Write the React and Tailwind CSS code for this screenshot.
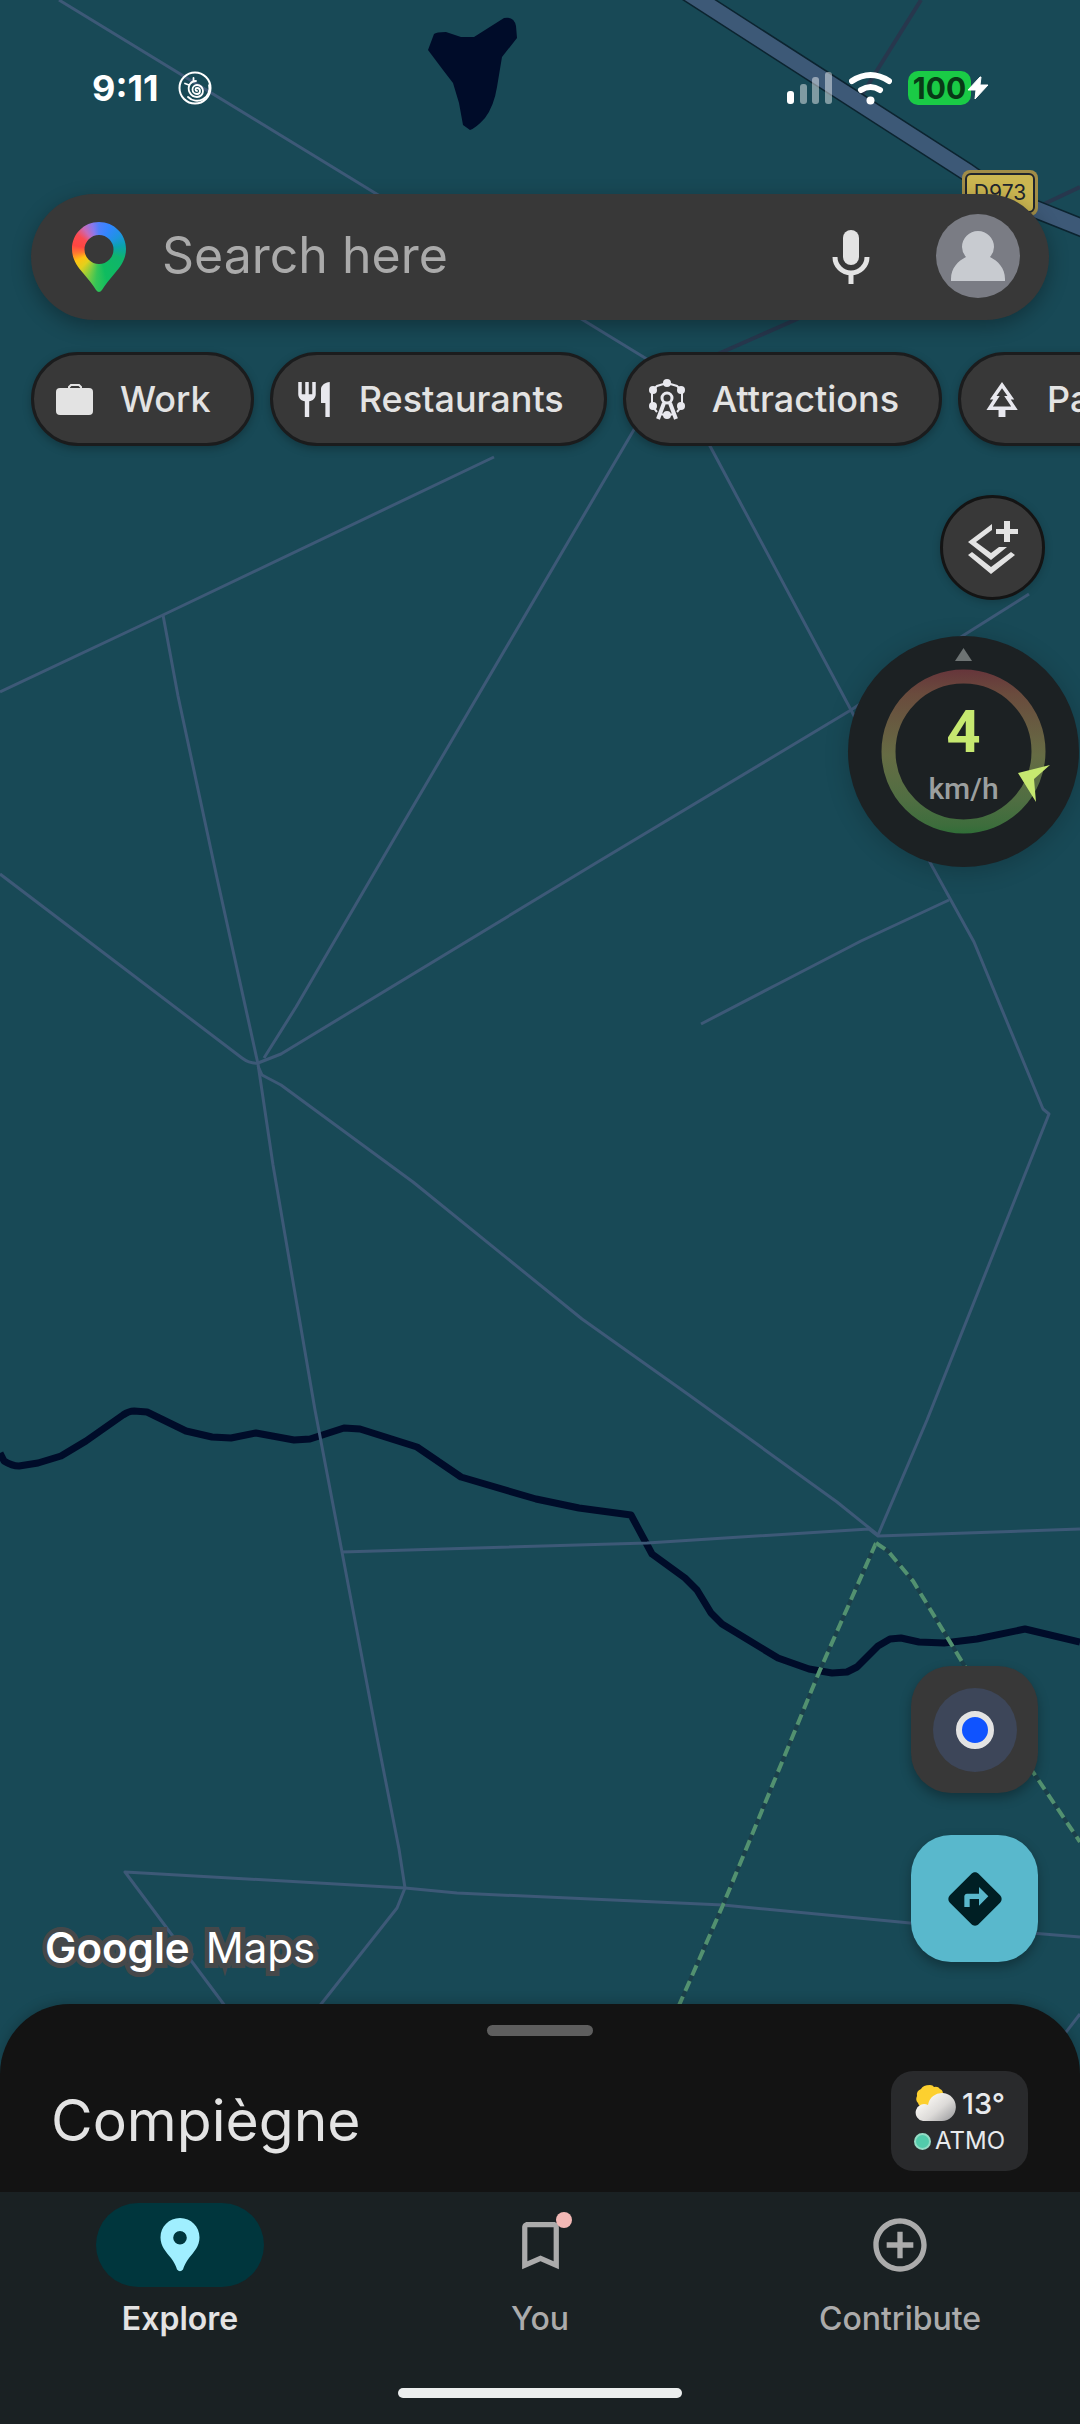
import React from "react";
import {
  MdAddCircleOutline,
  MdBookmarkBorder,
  MdDirections,
  MdOutlinePark,
  MdRestaurant,
} from "react-icons/md";

const roads = [
  "M59 0 375 193 583 320 668 372",
  "M668 372 632 433 408 815 296 1007 264 1058",
  "M668 372 710 446 851 710 932 866 974 942 1043 1109 1049 1114 927 1420 878 1535",
  "M494 457 163 615 0 692",
  "M163 615 178 696 217 878 258 1064 273 1165 315 1410 342 1552 377 1737 399 1849 405 1888 397 1908 318 2008",
  "M0 874 242 1058Q250 1064 258 1063L281 1054 596 863 851 710 964 635 1029 594",
  "M701 1024 778 984 861 941 949 900",
  "M258 1066 262 1075 281 1085 413 1182 582 1319 689 1395 837 1502 878 1535",
  "M342 1552 647 1543 869 1529 878 1536 1080 1529",
  "M228 2010 125 1872 405 1888 457 1893 723 1905 910 1923 1080 1937",
  "M1080 2014 1060 2040",
];

const trails = [
  "M876 1543 820 1670 723 1905 677 2010",
  "M876 1543 888 1551 913 1581 964 1665 1033 1772 1080 1842",
];

function MapCanvas() {
  return (
    <svg
      className="absolute inset-0 h-full w-full"
      viewBox="0 0 1080 2424"
      preserveAspectRatio="xMidYMin slice"
      aria-hidden="true"
    >
      <rect width="1080" height="2424" fill="#184956" />
      <path
        d="M428 50 434 34Q436 32 446 32L461 37H474L504 18Q514 16 516 26L517 38 502 57 497 87Q494 106 485 118 476 128 470 130L463 125 459 103 453 83 443 70Z"
        fill="#000c29"
      />
      <path
        d="M0 1453 4 1461Q12 1466 19 1466L38 1463 61 1456 86 1441 123 1415Q129 1411 134 1411L147 1412 186 1431 212 1437 231 1438 256 1433 294 1440 310 1439 344 1428 360 1429 417 1447 461 1477 536 1499 579 1508 631 1515 652 1554 685 1578 697 1590 711 1613 722 1624 778 1658 809 1669 832 1673 847 1672 857 1667 878 1646 890 1639 901 1638 919 1642 944 1643 977 1639 1025 1629 1080 1642"
        fill="none"
        stroke="#000c29"
        strokeWidth="7"
        strokeLinejoin="round"
      />
      <g fill="none" stroke="#27374d" strokeWidth="4">
        <path d="M921 0 876 72 860 98" />
        <path d="M1080 187 1044 204" />
        <path d="M1000 225 795 320 668 376" />
      </g>
      <g fill="none" stroke="#3d5977" strokeWidth="3" strokeLinejoin="round">
        {roads.map((d) => (
          <path key={d} d={d} />
        ))}
      </g>
      {trails.map((d) => (
        <g key={d} fill="none" strokeWidth="4">
          <path d={d} stroke="#1b3f4a" />
          <path d={d} stroke="#529170" strokeDasharray="11 6" />
        </g>
      ))}
      <path d="M684 -10 967 172 1000 195 1100 235" fill="none" stroke="#0c2430" strokeWidth="19" />
      <path d="M684 -10 967 172 1000 195 1100 235" fill="none" stroke="#3d5977" strokeWidth="16" />
      <rect x="962" y="170" width="76" height="46" rx="8" fill="#a18d48" />
      <rect x="966" y="174" width="68" height="38" rx="5" fill="#cbb651" stroke="#20252e" strokeWidth="2" />
      <text x="1000" y="200" textAnchor="middle" fontFamily="Inter, sans-serif" fontSize="21" fill="#20252e">
        D973
      </text>
    </svg>
  );
}

function StatusBar() {
  return (
    <div className="relative flex items-center justify-between pt-[70px] pr-[91px] pl-[92px] text-white">
      <div className="flex h-9 items-center gap-5">
        <span className="text-[36px] leading-9 font-bold">9:11</span>
        <svg width="34" height="34" viewBox="0 0 34 34" fill="none" stroke="white" strokeLinecap="round" aria-hidden="true">
          <circle cx="17" cy="17" r="15.500" strokeWidth="2" />
          <path
            d="M19 20a1.500 1.500 0 0 1 0-3 3 3 0 0 1 0 6 4.500 4.500 0 0 1 0-9 6 6 0 0 1 0 12A8.500 8.500 0 0 1 12 13Q14 10 18 10M15.500 10.500V7M11 14 7 12.500M31 14A12.500 12.500 0 0 1 10 26"
            strokeWidth="1.800"
          />
        </svg>
      </div>
      <div className="flex h-9 items-center">
        <svg width="46" height="34" viewBox="0 0 46 34" fill="white" aria-hidden="true">
          <rect x="0" y="20" width="7" height="13" rx="3" />
          <g opacity="0.45">
            <rect x="13" y="13" width="7" height="20" rx="3" />
            <rect x="25" y="6" width="7" height="27" rx="3" />
            <rect x="38" y="1" width="7" height="32" rx="3" />
          </g>
        </svg>
        <svg className="ml-4" width="43" height="34" viewBox="0 0 43 34" fill="none" stroke="white" strokeLinecap="round" aria-hidden="true">
          <path d="M3 10Q21.500-2 40 10" strokeWidth="6" />
          <path d="M12 19Q21.500 13 31 19" strokeWidth="6" />
          <circle cx="21.500" cy="29.500" r="4" fill="white" stroke="none" />
        </svg>
        <span className="ml-4 flex h-[34px] w-[63px] items-center justify-center rounded-[10px] bg-[#1acb46] text-[30px] leading-none font-bold text-[#083a16]">
          100
        </span>
        <svg className="relative -ml-1" width="22" height="24" viewBox="0 0 22 24" fill="white" aria-hidden="true">
          <path d="M13 1 1 14h8L8 23 21 9h-8l1-8Z" stroke="white" strokeWidth="1" strokeLinejoin="round" />
        </svg>
      </div>
    </div>
  );
}

function SearchBar() {
  return (
    <form className="relative mx-[31px] mt-[88px] flex h-[126px] items-center rounded-full bg-[#383838] pr-7 pl-[41px] shadow-[0_6px_20px_rgba(0,0,0,0.3)]">
      <span
        className="h-[70px] w-[54px] shrink-0 bg-[conic-gradient(from_0deg_at_27px_28px,#4f80fb_0deg,#3186ff_25deg,#1e94e0_55deg,#0aa2ae_80deg,#0fb46c_110deg,#0fbc5f_165deg,#35c457_185deg,#84cc40_203deg,#e3d01c_225deg,#ffc112_245deg,#ff7a30_262deg,#ff4641_280deg,#fb4a50_305deg,#c86ab8_325deg,#8a78ec_345deg,#4f80fb_360deg)] [clip-path:path(evenodd,'M27_0C42_0_54_12_54_27C54_37_49_44_43_51C37_58_33_63_30_68Q27_72_24_68C21_63_17_58_11_51C5_44_0_37_0_27C0_12_12_0_27_0ZM27_13A14_14_0_1_0_27_42A14_14_0_1_0_27_13Z')]"
        aria-hidden="true"
      />
      <input
        type="text"
        aria-label="Search here"
        placeholder="Search here"
        className="ml-9 h-[60px] min-w-0 flex-1 bg-transparent pb-1 text-[50px] text-[#aaaaaa] outline-none placeholder:text-[#aaaaaa]"
      />
      <button type="button" aria-label="Voice search" className="mr-[65px]">
        <svg width="38" height="56" viewBox="0 0 38 56" aria-hidden="true">
          <rect x="11" y="1" width="16" height="35" rx="8" fill="#e3e3e3" />
          <path d="M3 28a16 16 0 0 0 32 0M19 44v11" fill="none" stroke="#e3e3e3" strokeWidth="5" />
        </svg>
      </button>
      <button type="button" aria-label="Account">
        <svg width="86" height="86" viewBox="0 0 86 86" aria-hidden="true">
          <circle cx="43" cy="42" r="42" fill="#7a7c84" />
          <path d="M16 67V65C16 54 23 47 31 43Q27 38 27 33a16 16 0 0 1 32 0q0 5-4 10c8 4 15 11 15 22v2Z" fill="#c8cbd0" />
        </svg>
      </button>
    </form>
  );
}

const WorkIcon = () => (
  <svg width="42" height="48" viewBox="0 0 42 48" aria-hidden="true">
    <rect x="2" y="13" width="37" height="27" rx="4" fill="#e3e3e3" />
    <path d="M15 14v-2l2-2h8l2 2v2" fill="none" stroke="#e3e3e3" strokeWidth="2" />
  </svg>
);

const wheelCabins = [
  [21, 8],
  [7, 15],
  [35, 15],
  [7, 31],
  [35, 31],
  [21, 40],
];

const FerrisWheelIcon = () => (
  <svg width="42" height="48" viewBox="0 0 42 48" fill="none" stroke="currentColor" aria-hidden="true">
    <path d="M21 8 31 11 36 16V31L31 37M21 8 11 11 6 16V31L11 37M15 39 21 41 27 39" strokeWidth="2" />
    <circle cx="21" cy="23" r="5" strokeWidth="3" />
    <path d="M18 28 12 44M24 28 30 44" strokeWidth="4" />
    {wheelCabins.map(([x, y]) => (
      <circle key={`${x}-${y}`} cx={x} cy={y} r="4" fill="currentColor" stroke="none" />
    ))}
  </svg>
);

const chips = [
  { label: "Work", icon: <WorkIcon /> },
  { label: "Restaurants", icon: <MdRestaurant size={47} /> },
  { label: "Attractions", icon: <FerrisWheelIcon /> },
  { label: "Parks", icon: <MdOutlinePark size={47} /> },
];

function Chips() {
  return (
    <div className="relative mt-8 flex gap-4 pl-[31px]">
      {chips.map(({ label, icon }) => (
        <button
          key={label}
          type="button"
          className="flex h-[94px] shrink-0 items-center gap-6 rounded-full border-[3px] border-[#1b1c1d] bg-[#383838] pr-10 pl-5 text-[36px] font-medium text-[#e3e3e3] shadow-[0_3px_8px_rgba(0,0,0,0.25)]"
        >
          <span className="flex w-[42px] justify-center text-[#e8e8ee]">{icon}</span>
          {label}
        </button>
      ))}
    </div>
  );
}

function Speedometer() {
  return (
    <div className="relative mt-9 mr-px h-[231px] w-[231px] rounded-full bg-[#1c2123] shadow-[0_4px_24px_rgba(0,0,0,0.2)]">
      <svg className="absolute inset-0" width="231" height="231" viewBox="0 0 231 231" aria-hidden="true">
        <defs>
          <linearGradient id="speed-ring" x1="0" y1="33" x2="0" y2="198" gradientUnits="userSpaceOnUse">
            <stop offset="0" stopColor="#66353b" />
            <stop offset="0.15" stopColor="#6a4b3d" />
            <stop offset="0.3" stopColor="#685840" />
            <stop offset="0.52" stopColor="#666c44" />
            <stop offset="0.8" stopColor="#4f6e42" />
            <stop offset="0.95" stopColor="#3d6d3c" />
            <stop offset="1" stopColor="#2f6e37" />
          </linearGradient>
        </defs>
        <path d="M115.500 12 124 25H107Z" fill="#6d7373" />
        <circle cx="115.500" cy="115.500" r="75" fill="none" stroke="url(#speed-ring)" strokeWidth="14" />
        <path d="M202 129 170 137 188 166 186 143Z" fill="#c6e870" />
      </svg>
      <div className="relative flex flex-col items-center pt-[61px] font-['Roboto',sans-serif]">
        <span className="text-[60px] leading-[70px] font-bold text-[#c6e870]">4</span>
        <span className="text-[30px] leading-[44px] font-medium text-[#9b9f9f]">km/h</span>
      </div>
    </div>
  );
}

function MapControls() {
  return (
    <div className="relative flex flex-col items-end pt-[49px]">
      <button
        type="button"
        aria-label="Layers"
        className="mr-[35px] h-[105px] w-[105px] rounded-full border-[3px] border-[#141414] bg-[#383838] shadow-[0_2px_8px_rgba(0,0,0,0.2)]"
      >
        <svg className="mx-auto" width="99" height="99" viewBox="3 3 99 99" fill="#e3e3e3" aria-hidden="true">
          <path d="M52 29 28 47 51 65 67 52H59L51 58 36 47 52 35Z" />
          <path d="M28 60 32 57 51 72 71 57 75 60 51 79Z" />
          <path d="M64 26h6v8h8v5h-8v8h-6v-8h-8v-5h8Z" />
        </svg>
      </button>
      <Speedometer />
    </div>
  );
}

function MapFooter() {
  return (
    <div className="relative mt-auto mb-[42px] flex items-end justify-between pr-[42px] pl-[45px]">
      <div className="-mb-3 flex items-baseline gap-4 text-[42px] leading-[52px] text-white [paint-order:stroke_fill] [-webkit-text-stroke:10px_#45484a] [stroke-linejoin:round]">
        <span className="font-semibold">Google</span>
        <span>Maps</span>
      </div>
      <div className="flex flex-col gap-[42px]">
        <button
          type="button"
          aria-label="Your location"
          className="flex h-[127px] w-[127px] items-center justify-center rounded-[40px] bg-[#383838] shadow-[0_5px_12px_rgba(0,0,0,0.3)]"
        >
          <span className="flex h-[84px] w-[84px] items-center justify-center rounded-full bg-[#3d4659]">
            <span className="h-[38px] w-[38px] rounded-full border-[6px] border-[#e3e3e3] bg-[#0f53ff]" />
          </span>
        </button>
        <button
          type="button"
          aria-label="Directions"
          className="flex h-[127px] w-[127px] items-center justify-center rounded-[40px] bg-[#59b8cc] text-[#001f24] shadow-[0_5px_12px_rgba(0,0,0,0.3)]"
        >
          <MdDirections size={64} />
        </button>
      </div>
    </div>
  );
}

function Sheet() {
  return (
    <section className="relative h-[188px] rounded-t-[70px] bg-[#131313] pt-[21px] shadow-[0_-2px_12px_rgba(0,0,0,0.2)]">
      <div className="mx-auto h-[11px] w-[106px] rounded-full bg-[#5e5e5e]" />
      <div className="mt-[35px] flex items-center justify-between pr-[52px] pl-[51px]">
        <h1 className="text-[57px] leading-[68px] text-[#e3e3e3]">Compiègne</h1>
        <div className="flex h-[100px] w-[137px] flex-col items-center justify-center rounded-[22px] bg-[#292a2c] text-[#e8eaed]">
          <div className="flex h-10 items-center gap-[6px]">
            <svg width="42" height="38" viewBox="0 0 42 38" aria-hidden="true">
              <defs>
                <linearGradient id="cloud" x1="0.300" y1="0.200" x2="1" y2="0.800">
                  <stop offset="0" stopColor="#f6f4f0" />
                  <stop offset="0.5" stopColor="#dcdad8" />
                  <stop offset="1" stopColor="#a4a4a6" />
                </linearGradient>
              </defs>
              <path
                d="M16 1q3 0 4 2 4-1 6 2 3 1 3 5 2 3 0 6 0 5-4 6-3 4-7 3-4 2-8-1-5-1-6-5-3-3-1-7-1-5 4-7 2-4 9-4Z"
                fill="#fdd02f"
              />
              <path d="M9 37a8.500 8.500 0 1 1 5-16 14 14 0 1 1 14 16Z" fill="url(#cloud)" />
            </svg>
            <span className="text-[29px] leading-none font-medium">13°</span>
          </div>
          <div className="flex h-9 items-center gap-1">
            <span className="h-[17px] w-[17px] rounded-full border-[2px] border-[#93dcc5] bg-[#52ccab]" />
            <span className="text-[24px] leading-none">ATMO</span>
          </div>
        </div>
      </div>
    </section>
  );
}

const tabs = [
  {
    label: "Explore",
    active: true,
    icon: (
      <svg width="40" height="54" viewBox="0 0 40 54" aria-hidden="true">
        <path
          fillRule="evenodd"
          fill="#a0efff"
          d="M20 0C31 0 39.500 8.500 39.500 19.500 39.500 28 34 34 29 40 26 44 24 48 23 51.500Q20 55 17 51.500C16 48 14 44 11 40 6 34 .5 28 .5 19.500.5 8.500 9 0 20 0ZM20 13a6.800 6.800 0 1 0 0 13.600A6.800 6.800 0 1 0 20 13Z"
        />
      </svg>
    ),
  },
  { label: "You", badge: true, icon: <MdBookmarkBorder size={63} /> },
  { label: "Contribute", icon: <MdAddCircleOutline size={64} /> },
];

function BottomNav() {
  return (
    <nav className="relative flex h-[232px] flex-col bg-[#1a2123] pt-[11px]">
      <div className="grid grid-cols-3">
        {tabs.map(({ label, icon, active, badge }) => (
          <button
            key={label}
            type="button"
            className={
              active
                ? "flex flex-col items-center text-[32px] leading-10 font-semibold text-[#e3e3e3]"
                : "flex flex-col items-center text-[32px] leading-10 font-medium text-[#ababab]"
            }
          >
            <span
              className={
                active
                  ? "relative flex h-[84px] w-[168px] items-center justify-center rounded-full bg-[#00363d]"
                  : "relative flex h-[84px] w-[168px] items-center justify-center"
              }
            >
              {icon}
              {badge && <span className="absolute top-[9px] right-[52px] h-4 w-4 rounded-full bg-[#f2b8b5]" />}
            </span>
            <span className="mt-3">{label}</span>
          </button>
        ))}
      </div>
      <div className="mx-auto mt-auto mb-[26px] h-[10px] w-[284px] rounded-full bg-[#eceeee]" />
    </nav>
  );
}

export default function App() {
  return (
    <main className="relative flex min-h-screen flex-col overflow-hidden bg-[#184956] font-['Inter',sans-serif]">
      <MapCanvas />
      <StatusBar />
      <SearchBar />
      <Chips />
      <MapControls />
      <MapFooter />
      <Sheet />
      <BottomNav />
    </main>
  );
}
